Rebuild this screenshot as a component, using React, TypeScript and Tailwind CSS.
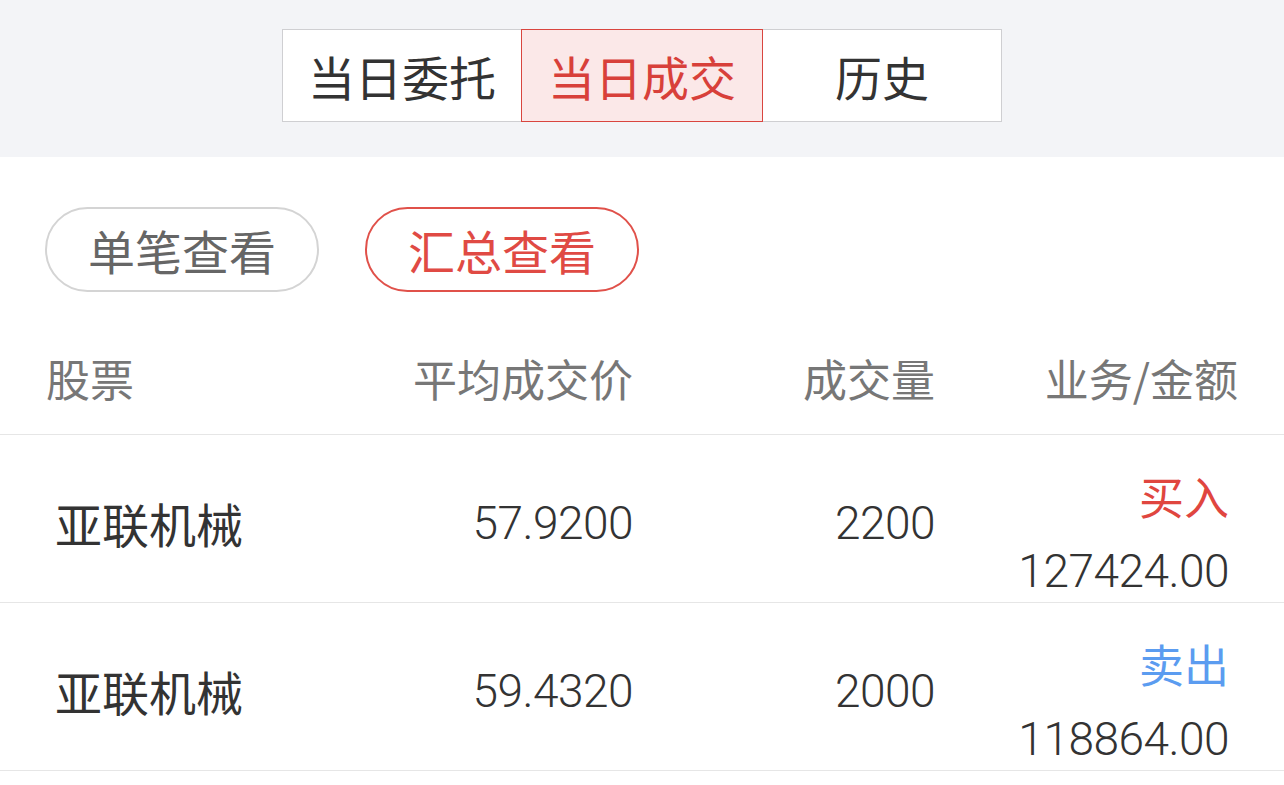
import { useState } from "react";

type Trade = {
    name: string;
    price: string;
    volume: string;
    side: "buy" | "sell";
    amount: string;
};

const trades: Trade[] = [
    { name: "亚联机械", price: "57.9200", volume: "2200", side: "buy", amount: "127424.00" },
    { name: "亚联机械", price: "59.4320", volume: "2000", side: "sell", amount: "118864.00" },
];

const cn = "font-['Noto_Sans_CJK_SC','Noto_Sans',sans-serif]";
const num = "font-['Roboto','Liberation_Sans',sans-serif] font-light";

const tabs = ["当日委托", "当日成交", "历史"];

const App = () => {
    const [tab, setTab] = useState(1);
    const [mode, setMode] = useState(1);

    return (
        <div className={`w-[1284px] min-h-[785px] bg-white ${cn}`}>
            <div className="h-[157px] bg-[#f3f4f7] flex justify-center pt-[29px]">
                <div className="flex h-[93px] border border-[#cfcfd2] bg-white">
                    {tabs.map((t, i) => (
                        <button
                            key={t}
                            onClick={() => setTab(i)}
                            className={
                                i === tab
                                    ? "w-[242px] -my-px border border-[#d9453f] bg-[#fbe8e8] text-[#d8403a] text-[47px] leading-none"
                                    : "w-[238px] text-[#333333] text-[47px] leading-none"
                            }
                        >
                            {t}
                        </button>
                    ))}
                </div>
            </div>

            <div className="flex gap-[46px] pl-[45px] pt-[50px]">
                {["单笔查看", "汇总查看"].map((t, i) => (
                    <button
                        key={t}
                        onClick={() => setMode(i)}
                        className={
                            i === mode
                                ? "w-[274px] h-[85px] rounded-full border-2 border-[#e0514a] text-[#e04a44] text-[47px] leading-none"
                                : "w-[274px] h-[85px] rounded-full border-2 border-[#d4d4d4] text-[#666666] text-[47px] leading-none"
                        }
                    >
                        {t}
                    </button>
                ))}
            </div>

            <div className="grid grid-cols-[300px_287px_302px_303px] pl-[46px] pr-[46px] h-[143px] pt-[54px] border-b border-[#e6e6e6] text-[44px] leading-[64px] text-[#777777]">
                <div>股票</div>
                <div className="text-right">平均成交价</div>
                <div className="text-right">成交量</div>
                <div className="text-right">业务/金额</div>
            </div>

            {trades.map((r, i) => (
                <div
                    key={i}
                    className="grid grid-cols-[300px_287px_302px_303px] pl-[46px] pr-[46px] h-[168px] border-b border-[#e6e6e6] items-center text-[#333333]"
                >
                    <div className="pl-[9px] pt-[8px] text-[47px] leading-[60px]">{r.name}</div>
                    <div className={`text-right pt-[8px] text-[46px] leading-[60px] tracking-[-0.5px] ${num}`}>{r.price}</div>
                    <div className={`text-right pt-[8px] text-[46px] leading-[60px] tracking-[-0.5px] ${num}`}>{r.volume}</div>
                    <div className="self-start pt-[31px] pr-[9px] text-right">
                        <div
                            className={
                                r.side === "buy"
                                    ? "text-[45px] leading-[60px] text-[#e0463f]"
                                    : "text-[45px] leading-[60px] text-[#5b9cf0]"
                            }
                        >
                            {r.side === "buy" ? "买入" : "卖出"}
                        </div>
                        <div className={`mt-[15px] text-[46px] leading-[60px] tracking-[-0.5px] ${num}`}>{r.amount}</div>
                    </div>
                </div>
            ))}
        </div>
    );
};

export default App;
